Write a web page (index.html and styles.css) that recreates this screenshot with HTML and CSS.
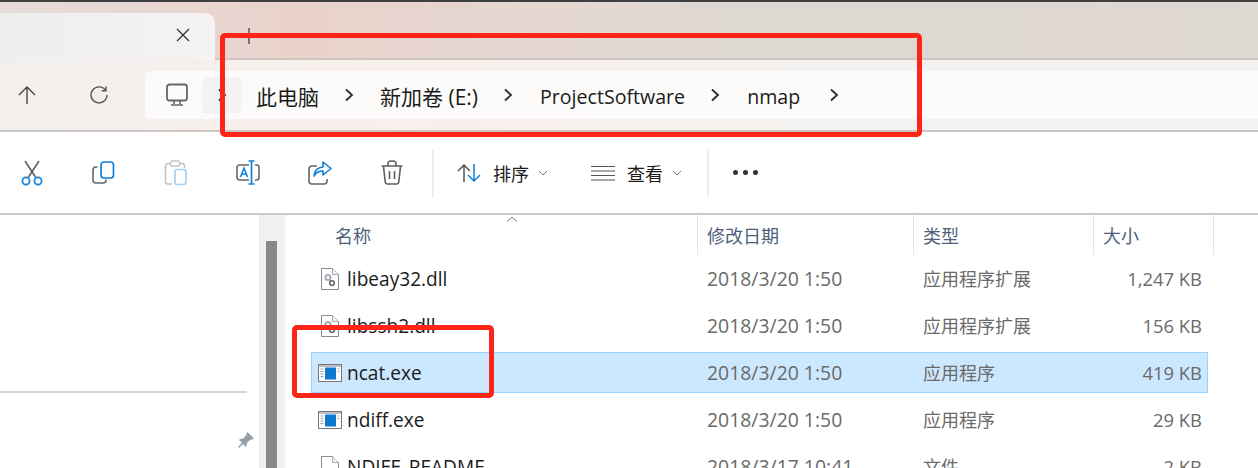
FILE: index.html
```html
<!DOCTYPE html>
<html lang="zh-CN">
<head>
  <meta charset="UTF-8">
  <title>nmap - 文件资源管理器</title>
  <link rel="stylesheet" href="styles.css">
</head>
<body>
  <svg class="defs" width="0" height="0">
    <symbol id="chev" viewBox="0 0 10 16"><path d="M2 2.500l6 5.500-6 5.500" fill="none" stroke="#2b2b2b" stroke-width="1.800"/></symbol>
    <symbol id="dll" viewBox="0 0 18 22">
      <path d="M.5.5h11l6 6v15H.5z" fill="#fff" stroke="#8a8a8a"/>
      <path d="M11.5.5v6h6" fill="#f2f2f2" stroke="#aaa"/>
      <circle cx="7" cy="9.5" r="2.6" fill="none" stroke="#a4adb8" stroke-width="2"/>
      <circle cx="11" cy="15" r="2.3" fill="none" stroke="#666" stroke-width="1.6"/>
    </symbol>
    <symbol id="exe" viewBox="0 0 24 18">
      <rect x=".5" y=".5" width="23" height="17" fill="#fff" stroke="#777"/>
      <path d="M1 1h22v2H1z" fill="#b9c0c8"/>
      <path d="M2.500 5h3M2.500 7.500h3M2.500 10h3M2.500 12.500h3M19.500 5h2M19.500 7.500h2" stroke="#9aa3ad"/>
      <rect x="7" y="3.500" width="11" height="12" fill="#0f78cf"/>
    </symbol>
  </svg>

  <div class="topline"></div>

  <div class="titlebar">
    <div class="tab">
      <svg class="tab-close" width="14" height="14" viewBox="0 0 14 14"><path d="M1 1l12 12M13 1L1 13" stroke="#333" stroke-width="1.300"/></svg>
    </div>
    <svg class="tab-add" width="16" height="16" viewBox="0 0 16 16"><path d="M8 0v16M0 8h16" stroke="#333" stroke-width="1.200"/></svg>
  </div>

  <div class="addressbar">
    <svg class="nav-icon" width="20" height="20" viewBox="0 0 20 20"><path d="M10 19V2M2 10l8-8 8 8" fill="none" stroke="#444" stroke-width="1.400"/></svg>
    <svg class="nav-icon refresh" width="20" height="20" viewBox="0 0 20 20"><path d="M16.500 5.200A8 8 0 1 0 18 10M17 1.500v4.300h-4.300" fill="none" stroke="#555" stroke-width="1.400"/></svg>
    <div class="path-field">
      <svg class="pc-icon" width="24" height="24" viewBox="0 0 24 24"><rect x="2" y="1.500" width="20" height="16" rx="2.500" fill="none" stroke="#666" stroke-width="1.800"/><path d="M9 18v3M15 18v3M6 22h12" stroke="#666" stroke-width="1.600"/></svg>
      <div class="path-hover"><svg class="chev" width="10" height="16"><use href="#chev"/></svg></div>
      <span class="crumb first">此电脑</span>
      <svg class="chev" width="10" height="16"><use href="#chev"/></svg>
      <span class="crumb">新加卷 (E:)</span>
      <svg class="chev" width="10" height="16"><use href="#chev"/></svg>
      <span class="crumb latin">ProjectSoftware</span>
      <svg class="chev" width="10" height="16"><use href="#chev"/></svg>
      <span class="crumb latin">nmap</span>
      <svg class="chev last" width="10" height="16"><use href="#chev"/></svg>
    </div>
  </div>

  <div class="toolbar">
    <svg class="tool" width="24" height="26" viewBox="0 0 24 26"><path d="M5 1l10.500 16M19 1L8.500 17" stroke="#5a5a5a" stroke-width="1.500"/><circle cx="6" cy="21" r="3.600" fill="none" stroke="#0f7fd8" stroke-width="1.700"/><circle cx="18" cy="21" r="3.600" fill="none" stroke="#0f7fd8" stroke-width="1.700"/></svg>
    <svg class="tool" width="24" height="26" viewBox="0 0 24 26"><path d="M5.500 7H4a3 3 0 0 0-3 3v10a3 3 0 0 0 3 3h7a3 3 0 0 0 3-3v-.5" fill="none" stroke="#666" stroke-width="1.600"/><rect x="9" y="2" width="12.500" height="16" rx="3" fill="none" stroke="#0f7fd8" stroke-width="1.700"/></svg>
    <svg class="tool" width="24" height="26" viewBox="0 0 24 26"><path d="M8 24H4a2.500 2.500 0 0 1-2.500-2.500V6A2.500 2.500 0 0 1 4 3.500h14A2.500 2.500 0 0 1 20.500 6v2" fill="none" stroke="#c4c4c4" stroke-width="1.600"/><rect x="6.500" y="1" width="9" height="5" rx="1.500" fill="#fff" stroke="#c4c4c4" stroke-width="1.400"/><rect x="11" y="9.500" width="11" height="15" rx="2.500" fill="none" stroke="#a9d0f0" stroke-width="1.700"/></svg>
    <svg class="tool" width="24" height="26" viewBox="0 0 24 26"><path d="M13 5H3.500A2.500 2.500 0 0 0 1 7.500v10A2.500 2.500 0 0 0 3.500 20H13M19 5h1.500A2.500 2.500 0 0 1 23 7.500v10a2.500 2.500 0 0 1-2.500 2.500H19" fill="none" stroke="#666" stroke-width="1.600"/><path d="M12.500 1h6M12.500 24h6M15.500 1v23" fill="none" stroke="#0f7fd8" stroke-width="1.700"/><path d="M4.500 17l3.500-9 3.500 9M5.700 14h4.600" fill="none" stroke="#0f7fd8" stroke-width="1.500"/></svg>
    <svg class="tool" width="24" height="26" viewBox="0 0 24 26"><path d="M9 6H4a3 3 0 0 0-3 3v12a3 3 0 0 0 3 3h12a3 3 0 0 0 3-3v-2" fill="none" stroke="#666" stroke-width="1.600"/><path d="M15 2l8 6.500-8 6.500v-4c-4 0-7 1.500-9 5 .5-5.500 3.500-8.500 9-9z" fill="none" stroke="#0f7fd8" stroke-width="1.600" stroke-linejoin="round"/></svg>
    <svg class="tool" width="24" height="26" viewBox="0 0 24 26"><path d="M1.500 6h21M8 5.500V4a3 3 0 0 1 3-3h2a3 3 0 0 1 3 3v1.500M3.500 6.500l1.700 15.200a2.500 2.500 0 0 0 2.500 2.300h8.600a2.500 2.500 0 0 0 2.500-2.300l1.700-15.200M9.500 11v8M14.500 11v8" fill="none" stroke="#5f5f5f" stroke-width="1.600"/></svg>
    <div class="tool-sep first"></div>
    <div class="tool-menu sort">
      <svg width="24" height="20" viewBox="0 0 24 20"><path d="M7 19V2M1 8l6-6 6 6" fill="none" stroke="#555" stroke-width="1.500"/><path d="M17 1v17M11 12l6 6 6-6" fill="none" stroke="#0f7fd8" stroke-width="1.500"/></svg>
      <span>排序</span>
      <svg class="caret" width="10" height="6" viewBox="0 0 10 6"><path d="M1 1l4 4 4-4" fill="none" stroke="#777"/></svg>
    </div>
    <div class="tool-menu view">
      <svg width="24" height="16" viewBox="0 0 24 16"><path d="M0 1.500h24M0 6h24M0 10.500h24M0 15h24" stroke="#555" stroke-width="1.200"/></svg>
      <span>查看</span>
      <svg class="caret" width="10" height="6" viewBox="0 0 10 6"><path d="M1 1l4 4 4-4" fill="none" stroke="#777"/></svg>
    </div>
    <div class="tool-sep second"></div>
    <div class="more"><i></i><i></i><i></i></div>
  </div>

  <div class="main">
    <div class="sidebar">
      <div class="side-line"></div>
      <svg class="pin" width="18" height="18" viewBox="0 0 18 18"><path d="M10.500 1L17 7.500l-2 1-2 .5-3 3-.5 3-1 1-2.500-3L2 17l-1-1 4-4.500-3-2.500 1-1 3-.5 3-3 .5-2z" fill="#96a0a8"/></svg>
    </div>
    <div class="scroll"><div class="thumb"></div></div>

    <div class="files">
      <div class="head">
        <div class="col name">名称
          <svg class="sort-mark" width="12" height="6" viewBox="0 0 12 6"><path d="M1 5.500L6 1l5 4.500" fill="none" stroke="#777"/></svg>
        </div>
        <div class="col date">修改日期</div>
        <div class="col type">类型</div>
        <div class="col size">大小</div>
      </div>

      <div class="row">
        <svg class="ficon" width="18" height="22"><use href="#dll"/></svg>
        <span class="fname">libeay32.dll</span><span>2018/3/20 1:50</span><span class="ftype">应用程序扩展</span><span class="fsize">1,247 KB</span>
      </div>
      <div class="row">
        <svg class="ficon" width="18" height="22"><use href="#dll"/></svg>
        <span class="fname">libssh2.dll</span><span>2018/3/20 1:50</span><span class="ftype">应用程序扩展</span><span class="fsize">156 KB</span>
      </div>
      <div class="row selected">
        <svg class="ficon" width="24" height="18"><use href="#exe"/></svg>
        <span class="fname">ncat.exe</span><span>2018/3/20 1:50</span><span class="ftype">应用程序</span><span class="fsize">419 KB</span>
      </div>
      <div class="row">
        <svg class="ficon" width="24" height="18"><use href="#exe"/></svg>
        <span class="fname">ndiff.exe</span><span>2018/3/20 1:50</span><span class="ftype">应用程序</span><span class="fsize">29 KB</span>
      </div>
      <div class="row">
        <svg class="ficon" width="18" height="22" viewBox="0 0 18 22"><path d="M.5.5h11l6 6v15H.5z" fill="#fff" stroke="#8a8a8a"/><path d="M11.500.5v6h6" fill="#f2f2f2" stroke="#aaa"/></svg>
        <span class="fname">NDIFF_README</span><span>2018/3/17 10:41</span><span class="ftype">文件</span><span class="fsize">2 KB</span>
      </div>
    </div>
  </div>

  <!-- 截图上的红色标注框 -->
  <div class="mark mark-path"></div>
  <div class="mark mark-file"></div>
</body>
</html>
```

FILE: styles.css
```css
html, body {
  margin: 0;
  height: 468px;
  overflow: hidden;
}

body {
  position: relative;
  background: #fff;
  font-family: "Open Sans", "Noto Sans CJK SC", sans-serif;
  color: #1b1b1b;
}

.defs {
  display: block;
  height: 0;
}

.topline {
  height: 2px;
  background: #3f3f3f;
}

/* 标题栏 */
.titlebar {
  display: flex;
  height: 58px;
  box-sizing: border-box;
  padding-top: 11px;
  border-bottom: 2px solid #cdc6c1;
  background: linear-gradient(90deg, #e6dcd9 0, #ead2cc 300px, #e4d8d1 560px, #dcd8d2 800px, #e0d8d2 1100px, #dfd9d3 1258px);
}

.tab {
  position: relative;
  width: 215px;
  height: 47px;
  border-top-right-radius: 10px;
  background: linear-gradient(90deg, #eeeeee 0, #f5f2f2 100%);
}

.tab-close {
  position: absolute;
  left: 176px;
  top: 15px;
}

.tab-add {
  margin: 15px 0 0 26px;
}

/* 地址栏 */
.addressbar {
  display: flex;
  align-items: center;
  height: 72px;
  box-sizing: border-box;
  padding-left: 17px;
  border-bottom: 2px solid #cbc5c1;
  background: linear-gradient(90deg, #f2efed 0, #f9efec 400px, #f4f2f0 800px, #f4f2f0 1258px);
}

.nav-icon.refresh {
  margin-left: 52px;
}

.path-field {
  display: flex;
  align-items: center;
  flex: 1;
  height: 48px;
  margin-left: 36px;
  padding-left: 20px;
  border-radius: 6px 0 0 6px;
  background: #fcfbfa;
  font-size: 21px;
}

.pc-icon {
  flex: none;
}

.path-hover {
  display: flex;
  align-items: center;
  justify-content: center;
  width: 40px;
  height: 37px;
  margin-left: 13px;
  border-radius: 6px;
  background: #f3f3f5;
}

.path-hover .chev {
  margin: 0;
}

.crumb {
  margin-top: 2px;
}

.crumb.first {
  margin-left: 14px;
}

.crumb.latin {
  margin-left: 1px;
  font-size: 19.6px;
}

.chev {
  flex: none;
  margin: 0 26px 0 25px;
}

.chev.last {
  margin-left: 29px;
}

/* 工具栏 */
.toolbar {
  display: flex;
  align-items: center;
  gap: 48px;
  height: 83px;
  box-sizing: border-box;
  padding-left: 20px;
  border-bottom: 2px solid #cfc8c5;
  font-size: 18px;
}

.tool {
  flex: none;
}

.tool-sep {
  width: 2px;
  height: 48px;
  background: #ececec;
}

.tool-sep.first {
  margin-left: -20px;
}

.tool-menu {
  display: flex;
  align-items: center;
  gap: 12px;
}

.tool-menu .caret {
  margin-left: -3px;
}

.tool-menu.sort {
  margin-left: -25px;
}

.tool-menu.view {
  margin-left: -5px;
}

.tool-sep.second {
  margin-left: -23px;
}

.more {
  display: flex;
  gap: 5px;
  margin-left: -24px;
}

.more i {
  width: 5px;
  height: 5px;
  border-radius: 50%;
  background: #333;
}

/* 主体 */
.main {
  display: flex;
  height: 253px;
  overflow: hidden;
}

.sidebar {
  position: relative;
  width: 259px;
  flex: none;
}

.side-line {
  width: 247px;
  height: 2px;
  margin-top: 176px;
  background: #d4d4d4;
}

.pin {
  position: absolute;
  left: 237px;
  top: 216px;
}

.scroll {
  width: 25px;
  flex: none;
  box-sizing: border-box;
  padding: 26px 7px 0;
  background: #f0f0f0;
}

.thumb {
  height: 230px;
  background: #888;
}

.files {
  flex: 1;
  min-width: 0;
  border-left: 3px solid #f7f7f7;
}

.head {
  display: grid;
  grid-template-columns: 411px 216px 180px 120px;
  height: 40px;
  margin-bottom: 3px;
  color: #4d6179;
  font-size: 18px;
}

.col {
  box-sizing: border-box;
  padding: 7px 0 0 9px;
  border-right: 1px solid #e4e4e4;
}

.col.name {
  position: relative;
  padding-left: 48px;
}

.sort-mark {
  position: absolute;
  left: 219px;
  top: 1px;
}

.row {
  display: grid;
  grid-template-columns: 35px 360px 216px 180px 99px;
  align-items: center;
  width: 897px;
  height: 41px;
  box-sizing: border-box;
  margin: 0 0 6px 24px;
  border: 1px solid transparent;
  color: #6a6a6a;
  font-size: 19.4px;
}

.row.selected {
  border-color: #99d1ff;
  background: #cce8ff;
}

.ficon {
  justify-self: center;
}

.fname {
  color: #1b1b1b;
  font-size: 19.1px;
}

.ftype {
  margin-top: -2px;
  font-size: 18px;
}

.fsize {
  font-size: 18.4px;
  text-align: right;
}

/* 标注 */
.mark {
  position: absolute;
  box-sizing: border-box;
  border: 5px solid #ff2418;
  border-radius: 5px;
}

.mark-path {
  left: 220px;
  top: 33px;
  width: 702px;
  height: 104px;
}

.mark-file {
  left: 292px;
  top: 325px;
  width: 202px;
  height: 73px;
}
```
